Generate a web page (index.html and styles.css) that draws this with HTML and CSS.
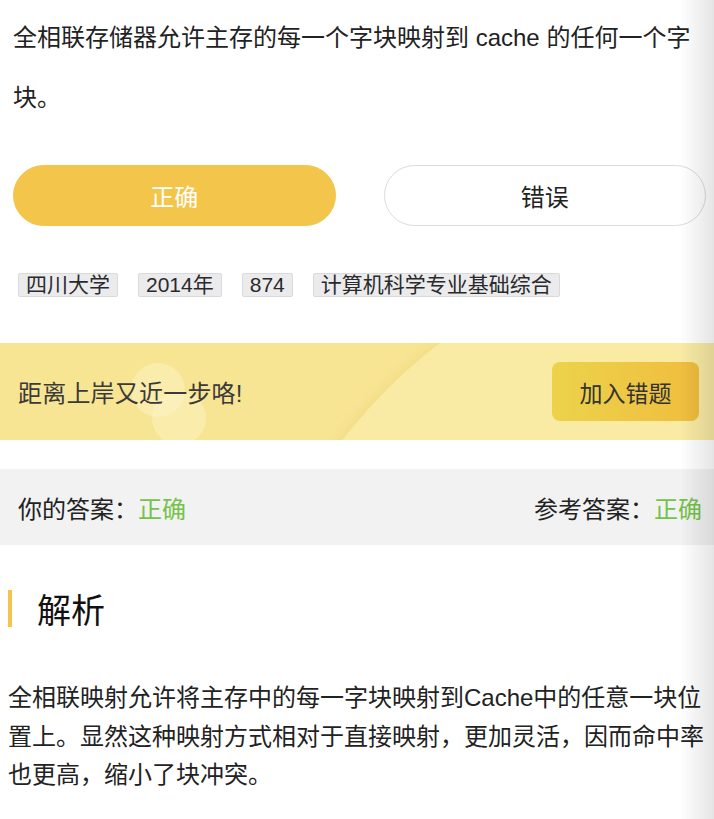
FILE: index.html
```html
<!DOCTYPE html>
<html>
<head>
<meta charset="utf-8">
<link rel="stylesheet" href="styles.css">
</head>
<body>
  <div class="question">全相联存储器允许主存的每一个字块映射到 cache 的任何一个字块。</div>

  <div class="options">
    <button class="options__btn options__btn_active">正确</button>
    <button class="options__btn">错误</button>
  </div>

  <div class="tags">
    <span class="tags__item">四川大学</span>
    <span class="tags__item">2014年</span>
    <span class="tags__item">874</span>
    <span class="tags__item">计算机科学专业基础综合</span>
  </div>

  <div class="banner">
    <span class="banner__arc"></span>
    <span class="banner__dot banner__dot_one"></span>
    <span class="banner__dot banner__dot_two"></span>
    <span class="banner__text">距离上岸又近一步咯!</span>
    <button class="banner__btn">加入错题</button>
  </div>

  <div class="answer">
    <div>你的答案：<span class="answer__ok">正确</span></div>
    <div>参考答案：<span class="answer__ok">正确</span></div>
  </div>

  <div class="analysis">
    <h2 class="analysis__title">解析</h2>
    <p class="analysis__text">全相联映射允许将主存中的每一字块映射到Cache中的任意一块位置上。显然这种映射方式相对于直接映射，更加灵活，因而命中率也更高，缩小了块冲突。</p>
  </div>

  <div class="edge-shade"></div>
</body>
</html>
```

FILE: styles.css
```css
body {
    margin: 0;
    font-family: "Liberation Sans", "Noto Sans CJK SC", sans-serif;
    color: #222;
    background: #fff;
}

.question {
    padding: 8px 13px 0;
    font-size: 24px;
    line-height: 60px;
}

.options {
    display: flex;
    gap: 48px;
    margin-top: 37px;
    padding: 0 8px 0 13px;
}

.options__btn {
    flex: 1;
    height: 61px;
    border: 1px solid #dcdcdc;
    border-radius: 31px;
    background: #fff;
    color: #222;
    font-family: inherit;
    font-size: 24px;
    padding: 0;
}

.options__btn_active {
    background: #f3c64b;
    border-color: #f3c64b;
    color: #fff;
}

.tags {
    display: flex;
    gap: 20px;
    margin-top: 47px;
    padding-left: 18px;
}

.tags__item {
    height: 22px;
    padding: 0 7px;
    border: 1px solid #dadada;
    border-radius: 2px;
    background: #ebebed;
    color: #2a2a2a;
    font-size: 21px;
    line-height: 22px;
}

.banner {
    position: relative;
    overflow: hidden;
    display: flex;
    align-items: center;
    justify-content: space-between;
    height: 97px;
    margin-top: 46px;
    padding: 0 15px 0 18px;
    background: #f8e594;
}

.banner__arc {
    position: absolute;
    left: 232px;
    top: -108px;
    width: 1056px;
    height: 1056px;
    border-radius: 50%;
    background: #f9eaa4;
    box-shadow: -4px 0 14px rgba(232, 200, 100, 0.35);
}

.banner__dot {
    position: absolute;
    width: 54px;
    height: 54px;
    border-radius: 50%;
    background: rgba(255, 248, 215, 0.35);
}

.banner__dot_one {
    left: 131px;
    top: 20px;
}

.banner__dot_two {
    left: 152px;
    top: 48px;
}

.banner__text {
    position: relative;
    color: #3a3a3a;
    font-size: 24px;
    letter-spacing: 0.2px;
}

.banner__btn {
    position: relative;
    width: 147px;
    height: 59px;
    border: none;
    border-radius: 8px;
    background: linear-gradient(90deg, #ecd34b, #f0bd3e);
    color: #333;
    font-family: inherit;
    font-size: 23px;
    padding: 0;
}

.answer {
    display: flex;
    align-items: center;
    justify-content: space-between;
    height: 76px;
    margin-top: 29px;
    padding: 0 12px 0 18px;
    background: #f2f2f2;
    font-size: 24px;
    color: #222;
}

.answer__ok {
    color: #74c24a;
}

.analysis {
    padding: 0 8px;
}

.analysis__title {
    margin: 45px 0 0;
    height: 37px;
    padding-left: 25px;
    border-left: 4px solid #f3c64b;
    font-size: 34px;
    font-weight: normal;
    line-height: 42px;
    color: #111;
}

.analysis__text {
    margin: 52px 0 0;
    font-size: 24px;
    line-height: 38.6px;
    color: #222;
}

.edge-shade {
    position: fixed;
    top: 0;
    right: 0;
    bottom: 0;
    width: 34px;
    background: linear-gradient(90deg, rgba(0, 0, 0, 0), rgba(0, 0, 0, 0.1));
    pointer-events: none;
}
```
